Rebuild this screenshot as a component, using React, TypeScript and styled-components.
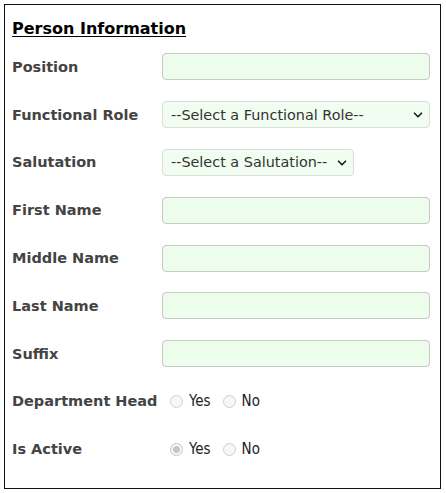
import styled, { createGlobalStyle } from "styled-components";
import { ChevronDown } from "lucide-react";

const GlobalStyle = createGlobalStyle`
  body {
    margin: 0;
    background: #fff;
    font-family: "DejaVu Sans", sans-serif;
  }
`;

const Panel = styled.fieldset`
  box-sizing: border-box;
  margin: 4px;
  width: 437px;
  height: 485px;
  border: 1px solid #111;
  padding: 0 7px;
  min-width: 0;
`;

const Heading = styled.legend`
  float: left;
  width: 100%;
  height: 38px;
  padding: 8px 0 0;
  display: flex;
  align-items: center;
  box-sizing: border-box;
  font-family: "DejaVu Sans", sans-serif;
  font-weight: bold;
  font-size: 16px;
  color: #000;
  text-decoration: underline;
  text-underline-offset: 2px;
`;

const Rows = styled.div`
  clear: both;
  display: grid;
  grid-template-columns: 150px 1fr;
  grid-auto-rows: 47.8px;
  align-items: center;
`;

const Label = styled.label`
  font-family: "DejaVu Sans", sans-serif;
  font-weight: bold;
  font-size: 14.5px;
  color: #444;
`;

const TextInput = styled.input`
  box-sizing: border-box;
  width: 268px;
  height: 27px;
  border: 1px solid #c8c8c8;
  border-radius: 4px;
  background: #ecfdec;
  outline: none;
`;

const SelectWrap = styled.div<{ $w: number }>`
  position: relative;
  width: ${(p) => p.$w}px;
  svg {
    position: absolute;
    right: 5px;
    top: 7px;
    pointer-events: none;
    color: #222;
  }
`;

const Select = styled.select`
  appearance: none;
  box-sizing: border-box;
  width: 100%;
  height: 27px;
  border: 1px solid #dcdcdc;
  border-radius: 4px;
  background: #f1fdf1;
  padding: 0 22px 0 8px;
  font-family: "DejaVu Sans", sans-serif;
  font-size: 14.4px;
  color: #333;
  outline: none;
`;

const RadioGroup = styled.div`
  display: flex;
  align-items: center;
  padding-left: 8px;
`;

const RadioLabel = styled.label`
  display: flex;
  align-items: center;
  gap: 6px;
  margin-right: 12px;
  font-family: "DejaVu Sans Condensed", "DejaVu Sans", sans-serif;
  font-size: 15px;
  color: #222;
`;

const Radio = styled.input`
  appearance: none;
  margin: 0;
  width: 13px;
  height: 13px;
  border-radius: 50%;
  border: 1px solid #cfcfcf;
  background: #f7f7f7;
  box-sizing: border-box;
  &:checked {
    border-color: #c4c4c4;
    background: radial-gradient(circle, #c6c6c6 0 3.2px, #f7f7f7 3.8px);
  }
`;

const textFields = ["First Name", "Middle Name", "Last Name", "Suffix"];

const YesNo = ({ name, checked }: { name: string; checked?: "yes" | "no" }) => (
  <RadioGroup>
    <RadioLabel>
      <Radio type="radio" name={name} disabled defaultChecked={checked === "yes"} />
      Yes
    </RadioLabel>
    <RadioLabel>
      <Radio type="radio" name={name} disabled defaultChecked={checked === "no"} />
      No
    </RadioLabel>
  </RadioGroup>
);

export default function App() {
  return (
    <>
      <GlobalStyle />
      <Panel>
        <Heading>Person Information</Heading>
        <Rows>
          <Label>Position</Label>
          <TextInput />

          <Label>Functional Role</Label>
          <SelectWrap $w={268}>
            <Select defaultValue="">
              <option value="">--Select a Functional Role--</option>
            </Select>
            <ChevronDown size={14} strokeWidth={3} />
          </SelectWrap>

          <Label>Salutation</Label>
          <SelectWrap $w={192}>
            <Select defaultValue="">
              <option value="">--Select a Salutation--</option>
            </Select>
            <ChevronDown size={14} strokeWidth={3} />
          </SelectWrap>

          {textFields.map((f) => (
            <>
              <Label key={f + "l"}>{f}</Label>
              <TextInput key={f} />
            </>
          ))}

          <Label>Department Head</Label>
          <YesNo name="head" />

          <Label>Is Active</Label>
          <YesNo name="active" checked="yes" />
        </Rows>
      </Panel>
    </>
  );
}
